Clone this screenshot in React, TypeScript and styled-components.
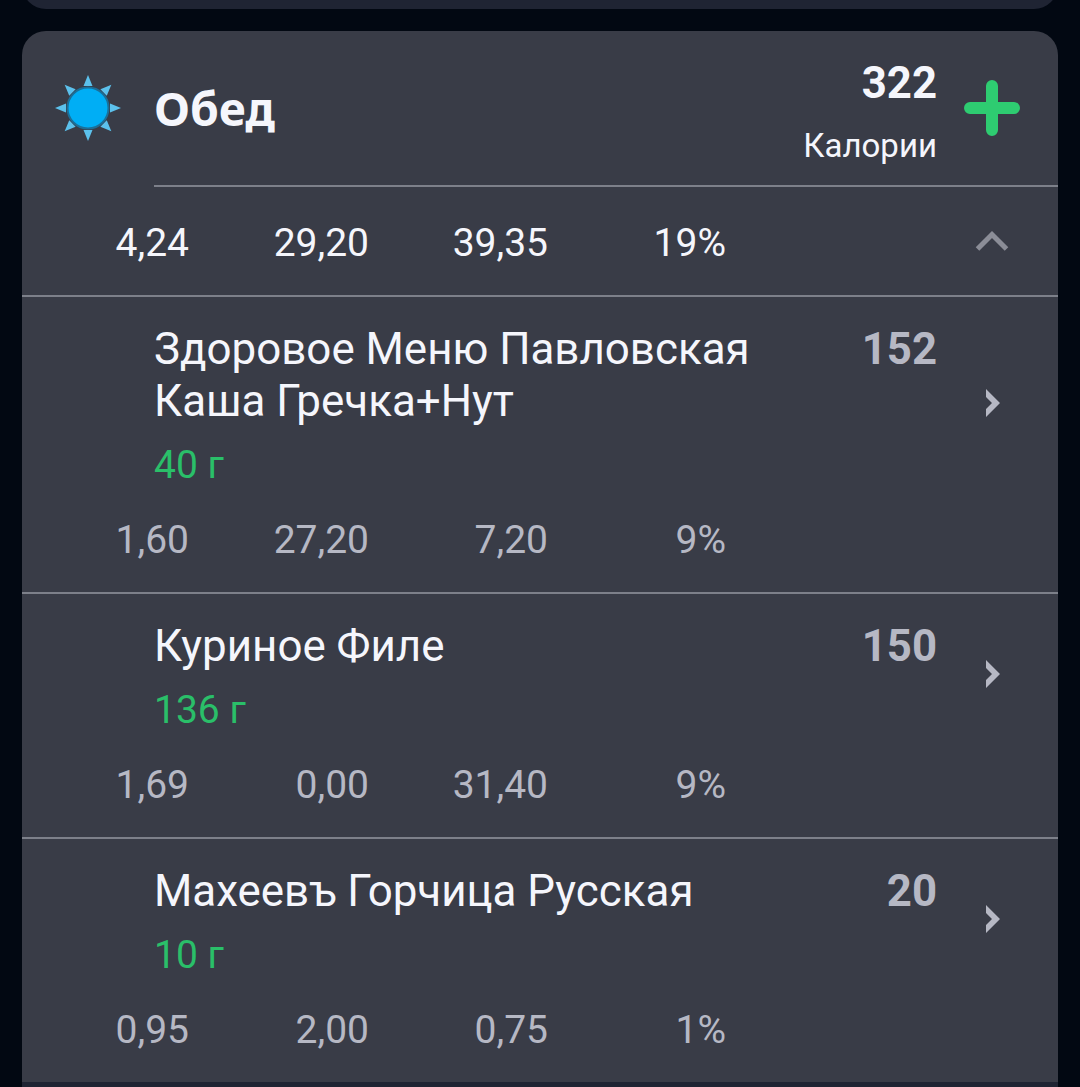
import React from "react";
import styled, { createGlobalStyle } from "styled-components";

const Global = createGlobalStyle`
  html, body { margin: 0; padding: 0; background: #020812; }
  body { font-family: Roboto, "Liberation Sans", sans-serif; }
`;

const Page = styled.div`
  width: 1080px;
  height: 1087px;
  overflow: hidden;
  box-sizing: border-box;
  padding: 0 22px;
  display: flex;
  flex-direction: column;
  gap: 22px;
`;

const TopCard = styled.div`
  height: 40px;
  margin-top: -31px;
  flex: none;
  background: #1f2433;
  border-radius: 0 0 24px 24px;
`;

const Card = styled.section`
  flex: none;
  height: 1051px;
  background: #393c47;
  border-radius: 24px 24px 0 0;
`;

const BottomCard = styled.div`
  height: 5px;
  background: #1f2433;
  margin-top: -22px;
  flex: none;
`;

const Header = styled.header`
  height: 154px;
  display: flex;
  align-items: center;
  box-sizing: border-box;
  padding-left: 33px;
`;

const SunBox = styled.div`
  width: 66px;
  height: 66px;
  flex: none;
  margin-right: 33px;
  display: flex;
`;

const Title = styled.h2`
  margin: 2px 0 0;
  flex: 1;
  font-family: "Noto Sans", sans-serif;
  font-weight: 700;
  font-size: 46.3px;
  line-height: 50px;
  color: #f5f6fc;
`;

const Totals = styled.div`
  display: flex;
  flex-direction: column;
  align-items: flex-end;
  width: 200px;
  margin-top: 8px;
`;

const TotalValue = styled.div`
  font-weight: 700;
  font-size: 43.75px;
  line-height: 50px;
  color: #f5f6fc;
`;

const TotalLabel = styled.div`
  font-size: 33px;
  line-height: 40px;
  margin-top: 18px;
  color: #f5f6fc;
`;

const IconColumn = styled.div`
  width: 121px;
  flex: none;
  display: flex;
  justify-content: center;
  align-items: center;
  box-sizing: border-box;
  padding-right: 12px;
`;

const Divider = styled.div<{ $inset?: number }>`
  height: 2px;
  margin-left: ${(p) => p.$inset ?? 0}px;
  background: #7d808a;
`;

const SummaryRow = styled.div`
  height: 108px;
  box-sizing: border-box;
  padding-top: 3px;
  display: flex;
  align-items: center;
`;

const Macros = styled.div<{ $muted?: boolean }>`
  display: grid;
  grid-template-columns: 167px 180px 179px 178px;
  font-size: 39px;
  line-height: 46px;
  color: ${(p) => (p.$muted ? "#b6b8c4" : "#f5f6fc")};
  text-align: right;
`;

const SummaryChevron = styled.div`
  margin-left: auto;
  width: 121px;
  box-sizing: border-box;
  padding: 0 12px 3px 0;
  display: flex;
  justify-content: center;
`;

const Item = styled.article<{ $height: number }>`
  height: ${(p) => p.$height}px;
  box-sizing: border-box;
  padding-top: 26px;
  display: flex;
  flex-direction: column;
`;

const ItemMain = styled.div`
  display: flex;
  padding-left: 132px;
`;

const ItemText = styled.div`
  flex: 1;
  min-width: 0;
`;

const ItemName = styled.div`
  font-size: 43.9px;
  line-height: 52px;
  color: #f5f6fc;
  width: 640px;
`;

const ItemWeight = styled.div`
  font-size: 39px;
  line-height: 46px;
  margin-top: 15px;
  color: #2abf69;
`;

const ItemCalories = styled.div`
  font-weight: 700;
  font-size: 43.75px;
  line-height: 52px;
  color: #b6b8c4;
  width: 160px;
  text-align: right;
`;

const ChevronColumn = styled.div`
  width: 121px;
  flex: none;
  box-sizing: border-box;
  padding: 0 9px 5px 0;
  display: flex;
  justify-content: center;
  align-items: center;
`;

const ItemMacros = styled.div`
  margin-top: 29px;
  flex: none;
`;

const Sun = () => (
  <svg width="66" height="66" viewBox="0 0 66 66">
    <g fill="#5cc1ec">
      {[0, 45, 90, 135, 180, 225, 270, 315].map((a) => (
        <polygon key={a} points="28.500,11 37.500,11 33,0" transform={`rotate(${a} 33 33)`} />
      ))}
    </g>
    <circle cx="33" cy="33" r="20.500" fill="#00aef5" stroke="#1b6f98" strokeWidth="2" />
  </svg>
);

const Plus = () => (
  <svg width="56" height="56" viewBox="0 0 56 56">
    <path d="M28 6V50M6 28H50" stroke="#2ecc71" strokeWidth="12" strokeLinecap="round" />
  </svg>
);

const ChevronUp = () => (
  <svg width="34" height="22" viewBox="0 0 34 22">
    <path d="M2.500 19L17 4.500 31.500 19" fill="none" stroke="#8b8d97" strokeWidth="5" />
  </svg>
);

const ChevronRight = () => (
  <svg width="14" height="28" viewBox="0 0 14 28">
    <polygon points="0,0 14,14 0,28 0,20 6,14 0,8" fill="#b6b8c4" />
  </svg>
);

const items = [
  { name: "Здоровое Меню Павловская Каша Гречка+Нут", weight: "40 г", cal: "152", macros: ["1,60", "27,20", "7,20", "9%"], height: 295, divider: true },
  { name: "Куриное Филе", weight: "136 г", cal: "150", macros: ["1,69", "0,00", "31,40", "9%"], height: 243, divider: true },
  { name: "Махеевъ Горчица Русская", weight: "10 г", cal: "20", macros: ["0,95", "2,00", "0,75", "1%"], height: 243, divider: false },
];

export default function App() {
  return (
    <Page>
      <Global />
      <TopCard />
      <Card>
        <Header>
          <SunBox><Sun /></SunBox>
          <Title>Обед</Title>
          <Totals>
            <TotalValue>322</TotalValue>
            <TotalLabel>Калории</TotalLabel>
          </Totals>
          <IconColumn><Plus /></IconColumn>
        </Header>
        <Divider $inset={132} />
        <SummaryRow>
          <Macros>
            <span>4,24</span><span>29,20</span><span>39,35</span><span>19%</span>
          </Macros>
          <SummaryChevron><ChevronUp /></SummaryChevron>
        </SummaryRow>
        <Divider />
        {items.map((it) => (
          <React.Fragment key={it.name}>
            <Item $height={it.height}>
              <ItemMain>
                <ItemText>
                  <ItemName>{it.name}</ItemName>
                  <ItemWeight>{it.weight}</ItemWeight>
                </ItemText>
                <ItemCalories>{it.cal}</ItemCalories>
                <ChevronColumn><ChevronRight /></ChevronColumn>
              </ItemMain>
              <ItemMacros>
                <Macros $muted>
                  {it.macros.map((m, i) => <span key={i}>{m}</span>)}
                </Macros>
              </ItemMacros>
            </Item>
            {it.divider && <Divider />}
          </React.Fragment>
        ))}
      </Card>
      <BottomCard />
    </Page>
  );
}
